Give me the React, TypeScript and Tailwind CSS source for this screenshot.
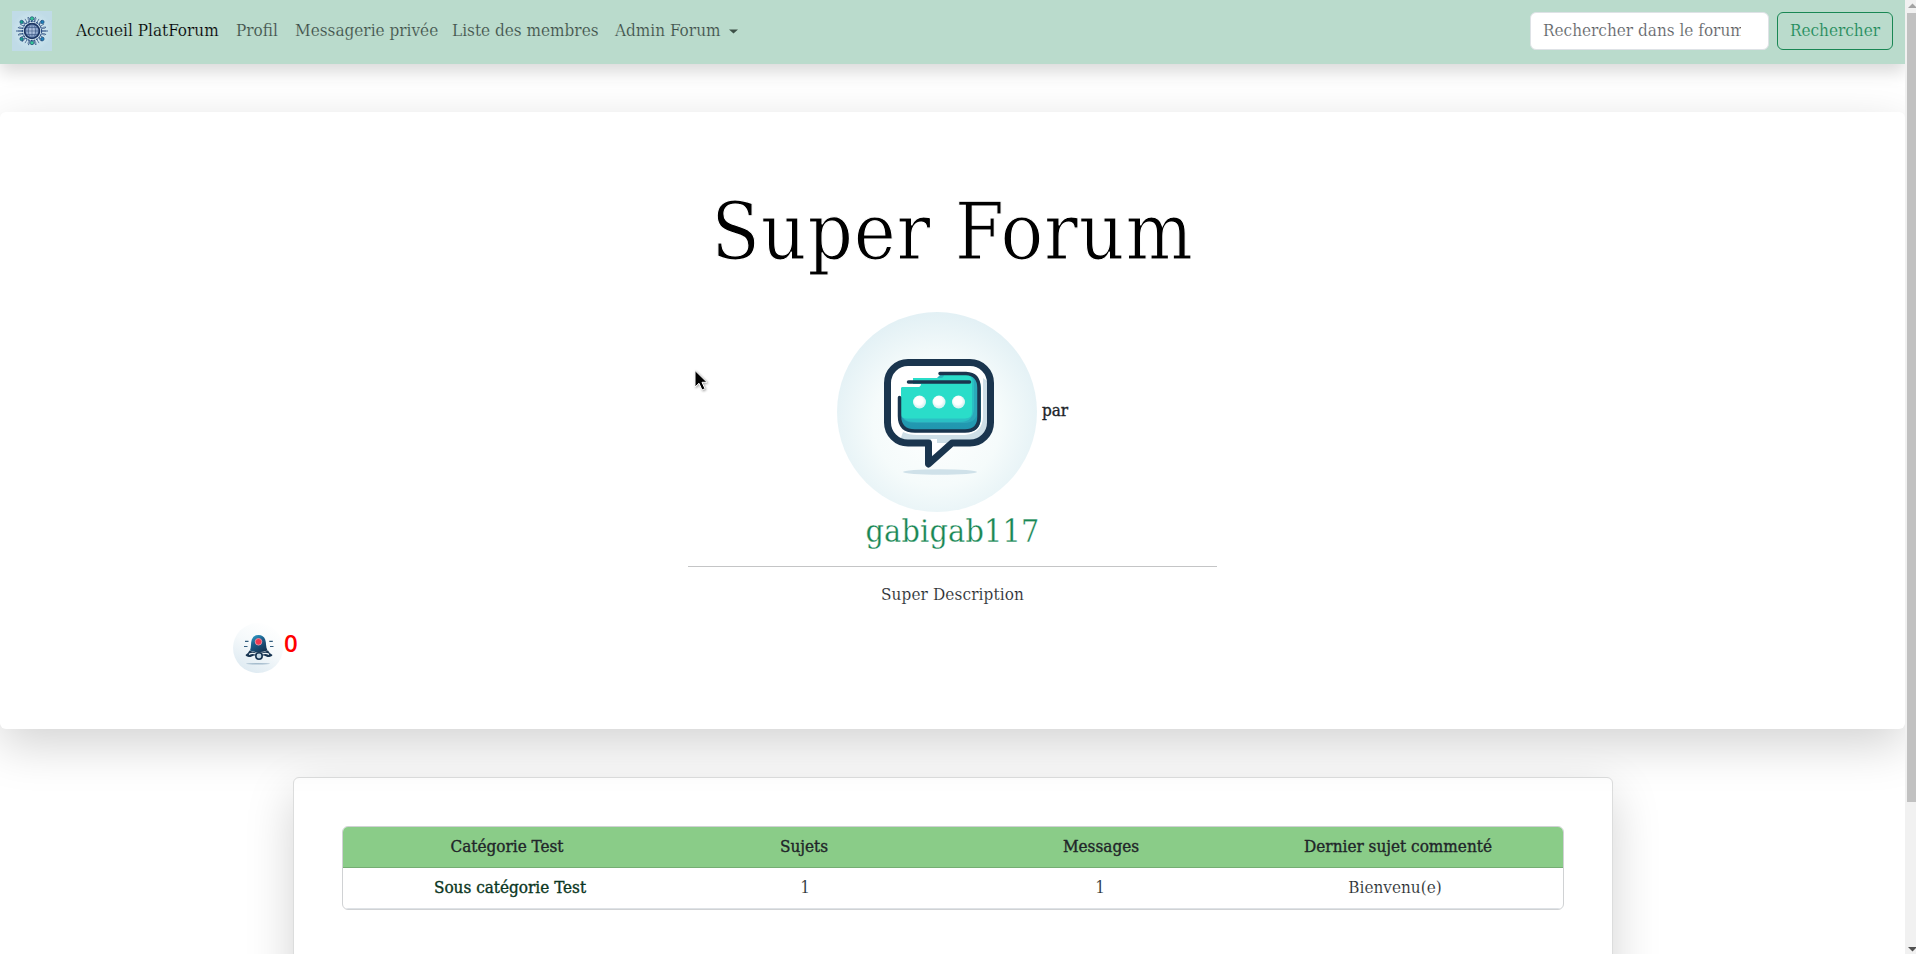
import React from "react";

function Logo() {
  const spokes = [0, 30, 60, 90, 120, 150, 180, 210, 240, 270, 300, 330];
  return (
    <svg width="40" height="40" viewBox="0 0 40 40" className="block">
      <defs>
        <radialGradient id="logoBg">
          <stop offset="0" stopColor="#eaf5fa" />
          <stop offset="0.7" stopColor="#c9e2ec" />
          <stop offset="1" stopColor="#c0dbe7" />
        </radialGradient>
        <radialGradient id="globe">
          <stop offset="0" stopColor="#c3d2ea" />
          <stop offset="1" stopColor="#7592bd" />
        </radialGradient>
      </defs>
      <rect width="40" height="40" fill="url(#logoBg)" />
      {spokes.map((a) => (
        <g key={a} transform={`rotate(${a} 20 20)`} stroke="#3f5f8b" fill="none">
          <path d="M20 11V6M17.5 10.500V7.500l-1.500-1M22.500 10.500V7.500l1.500-1" strokeWidth="0.7" />
          <circle cx="16" cy="6.500" r="0.500" fill="#3f5f8b" stroke="none" />
        </g>
      ))}
      <circle cx="20" cy="20" r="9.600" fill="none" stroke="#284b80" strokeWidth="1.200" strokeDasharray="2 0.900" />
      <circle cx="20" cy="20" r="7.400" fill="url(#globe)" stroke="#1c3563" strokeWidth="1.800" />
      <path d="M13 20h14M14 16.500h12M14 23.500h12M20 13v14" stroke="#34507e" strokeWidth="0.600" />
      <ellipse cx="20" cy="20" rx="3.600" ry="7" fill="none" stroke="#34507e" strokeWidth="0.600" />
      <path d="M4 20h7M29 20h7" stroke="#31568b" strokeWidth="0.900" />
      <g stroke="#1d4a78" strokeWidth="0.700">
        <circle cx="20" cy="7.600" r="1.900" fill="#35c795" />
        <circle cx="20" cy="31.800" r="1.900" fill="#35c795" />
        <circle cx="9.600" cy="11" r="1.700" fill="#17a08d" />
        <circle cx="30.400" cy="11" r="1.700" fill="#1e83bd" />
        <circle cx="9.600" cy="28" r="1.700" fill="#17a08d" />
        <circle cx="30.400" cy="28" r="1.700" fill="#1e83bd" />
      </g>
    </svg>
  );
}

function ForumAvatar() {
  return (
    <svg width="200" height="200" viewBox="0 0 200 200" className="block shrink-0">
      <defs>
        <radialGradient id="avBg" cx="0.5" cy="0.55" r="0.58">
          <stop offset="0" stopColor="#ffffff" />
          <stop offset="0.55" stopColor="#f5fbfb" />
          <stop offset="1" stopColor="#e0eff4" />
        </radialGradient>
        <linearGradient id="bubble" x1="0" y1="0" x2="0" y2="1">
          <stop offset="0" stopColor="#2cb6bd" />
          <stop offset="1" stopColor="#2094ae" />
        </linearGradient>
        <radialGradient id="dot" cx="0.45" cy="0.4">
          <stop offset="0.6" stopColor="#ffffff" />
          <stop offset="1" stopColor="#ddf3f3" />
        </radialGradient>
        <clipPath id="inside">
          <rect x="51" y="51" width="102" height="80" rx="20" />
        </clipPath>
      </defs>
      <circle cx="100" cy="100" r="100" fill="url(#avBg)" />
      <ellipse cx="103" cy="160" rx="37" ry="2.700" fill="#cfe1e9" />
      <path d="M71 51H133A20 20 0 0 1 153 71V111A20 20 0 0 1 133 131H116L92 152V131H71A20 20 0 0 1 51 111V71A20 20 0 0 1 71 51Z" fill="#ffffff" />
      <g clipPath="url(#inside)">
        <path d="M62 131L66 120Q72 123 80 123H128Q146 121 146 104V66L160 76V140H62Z" fill="#cedfe7" />
      </g>
      <path d="M94 127H101L96 144L114 127H124L93 150Z" fill="#cedfe7" />
      <path d="M94 127H100V138L94 145Z" fill="#fff" />
      <path d="M104 62H128Q144 62 144 78V105Q144 120 129 120H78Q64 120 64 106V90H110V66H100Z" fill="url(#bubble)" />
      <path d="M64 99H120Q136 99 136 82V66Q141 70 141 78V96Q141 111 127 111H80Q65 111 64 102Z" fill="#2ba9ba" />
      <path d="M76 66H104Q107 66 107 62H130Q137 64 137 70V95Q137 110 123 110H77Q64 110 64 98V77Q64 75 66 75H82Q84 75 84 72H76Z" fill="#2ac0c4" />
      <path d="M76 66H104Q107 66 107 62H128Q135 63 135 69V100Q135 106.500 128 106.500H70Q64 106.500 64 102V77Q64 75 66 75H82Q84 75 84 72H76Z" fill="#2addc9" />
      <path d="M103 61.500H129Q142 62 142 76V105Q142 119 128 119H78Q62.500 119 62.500 104V85.500" fill="none" stroke="#1a354e" strokeWidth="3.500" strokeLinecap="round" />
      <path d="M71.500 70H132.500" stroke="#1a354e" strokeWidth="3.500" strokeLinecap="round" />
      <circle cx="82.500" cy="90" r="6.500" fill="url(#dot)" />
      <circle cx="102" cy="90" r="6.500" fill="url(#dot)" />
      <circle cx="121.500" cy="90" r="6.500" fill="url(#dot)" />
      <path d="M71 50.500H133A20.500 20.500 0 0 1 153.500 71V110.500A20.500 20.500 0 0 1 133 131H115L91.500 152V131H71A20.500 20.500 0 0 1 50.500 110.500V71A20.500 20.500 0 0 1 71 50.500Z" fill="none" stroke="#1a354e" strokeWidth="7" strokeLinejoin="round" />
    </svg>
  );
}

function Bell() {
  return (
    <svg width="50" height="50" viewBox="0 0 50 50" className="block">
      <defs>
        <linearGradient id="bellBg" x1="0.7" y1="0" x2="0.2" y2="1">
          <stop offset="0" stopColor="#ffffff" />
          <stop offset="0.45" stopColor="#f5f9fb" />
          <stop offset="1" stopColor="#dce9f1" />
        </linearGradient>
        <linearGradient id="bellBody" x1="0.2" y1="0" x2="0.8" y2="1">
          <stop offset="0" stopColor="#2e9cc6" />
          <stop offset="0.4" stopColor="#1c5e8b" />
          <stop offset="1" stopColor="#14304e" />
        </linearGradient>
      </defs>
      <circle cx="25" cy="25" r="25" fill="url(#bellBg)" />
      <ellipse cx="25" cy="40.800" rx="12" ry="0.800" fill="#a5bccd" />
      <path d="M17 27.500C18.500 24 17.500 20 18.800 16.500Q20.500 12 25.500 12Q30.500 12 32.200 16.500C33.500 20 32.500 24 34.500 27.500Q25.500 31 17 27.500Z" fill="url(#bellBody)" />
      <path d="M16.500 27.500Q15.500 30 12.500 32Q13.500 34 17.500 34L21 32.500H31L34.500 34Q38.500 34 39.500 32Q36 30 35 27.500Q25.500 32 16.500 27.500Z" fill="#173451" />
      <path d="M16 31.300Q19 29.800 22.500 30.800H29.500Q33 29.800 36 31.300" stroke="#eef5f8" strokeWidth="1.300" fill="none" />
      <circle cx="26" cy="33" r="3.200" fill="#c5d8e4" stroke="#173451" strokeWidth="1.600" />
      <circle cx="25.500" cy="18.800" r="3.300" fill="#f0384f" stroke="#e996a6" strokeWidth="0.900" />
      <path d="M12 18.300h3.500M11 23.500h3.500M36.300 18.300h3.500M37 23.500h3.500" stroke="#315c7d" strokeWidth="1.200" />
    </svg>
  );
}

function Scrollbar() {
  return (
    <div className="flex h-full w-[11px] shrink-0 flex-col bg-[#f1f1f1] pl-[2px]">
      <svg width="9" height="13" viewBox="0 0 9 13" className="shrink-0">
        <path d="M1 8L5.500 3.500L10 8Z" fill="#a3a3a3" />
      </svg>
      <div className="h-[789px] shrink-0 bg-[#c1c1c1]" />
      <svg width="9" height="13" viewBox="0 0 9 13" className="mt-auto shrink-0">
        <path d="M1 6L5.500 10.500L10 6Z" fill="#505050" />
      </svg>
    </div>
  );
}

export default function App() {
  return (
    <div className="flex h-[954px] w-[1916px] overflow-hidden bg-white font-['DejaVu_Serif_Condensed','DejaVu_Serif',serif] text-[17px] font-normal leading-6 text-[#212529] [font-stretch:condensed]">
      <div className="relative h-full w-[1905px] overflow-hidden">
        <nav className="flex h-16 items-center bg-[#badbcc] px-3 pb-[2px] whitespace-nowrap text-[#3d4d46] shadow-[0_8px_16px_rgba(0,0,0,0.15)] [-webkit-text-stroke:0.2px_#badbcc]">
          <Logo />
          <a className="ml-6 w-[144px] pb-[3px] text-black">Accueil PlatForum</a>
          <a className="ml-4 w-[43px] pb-[3px]">Profil</a>
          <a className="ml-4 w-[141px] pb-[3px]">Messagerie privée</a>
          <a className="ml-4 w-[147px] pb-[3px]">Liste des membres</a>
          <a className="ml-4 w-[108px] pb-[3px]">Admin Forum</a>
          <svg width="9" height="5" viewBox="0 0 9 5" className="ml-[6px]">
            <path d="M0 0.500H9L4.500 4.500Z" fill="#3d5047" />
          </svg>
          <div className="ml-auto h-[38px] w-[239px] rounded-md border border-[#dee2e6] bg-white px-3 py-[5px] text-[#55595d] [-webkit-text-stroke:0.2px_#ffffff]">
            <div className="w-[198px] overflow-hidden">Rechercher dans le forum</div>
          </div>
          <button className="ml-2 h-[38px] w-[116px] rounded-md border border-[#198754] pb-[3px] text-center text-[#198754]">
            Rechercher
          </button>
        </nav>

        <header className="relative z-10 mt-12 h-[617px] rounded-md bg-white text-center shadow-[0_16px_48px_rgba(0,0,0,0.175)] [-webkit-text-stroke:0.15px_#ffffff]">
          <h1 className="pt-[72px] text-[79px] leading-[96px] tracking-[0.800px] text-black [-webkit-text-stroke:1.100px_#ffffff]">
            Super Forum
          </h1>
          <div className="mt-[32px] flex items-center justify-center gap-[5px]">
            <ForumAvatar />
            <b className="w-[27px] pb-[4px] font-normal text-[#212529] [-webkit-text-stroke:0.350px_#212529]">par</b>
          </div>
          <div className="text-[32px] leading-[38px] tracking-[0.200px] text-[#198754] [-webkit-text-stroke:0.300px_#ffffff]">gabigab117</div>
          <div className="mx-auto mt-4 h-px w-[529px] bg-[#c4c5c6]" />
          <p className="mt-[15px] tracking-[0.120px]">Super Description</p>
          <div className="mt-[17px] flex pl-[233px]">
            <Bell />
            <span className="mt-[3px] ml-px font-['Open_Sans',sans-serif] text-2xl leading-[33px] font-semibold text-[#ff0000] [-webkit-text-stroke:0px] [font-stretch:normal]">
              0
            </span>
          </div>
        </header>

        <main className="mx-auto mt-12 h-[400px] w-[1320px] rounded-md border border-[#dcdddd] bg-white p-12 shadow-[0_16px_48px_rgba(0,0,0,0.175)]">
          <div className="overflow-hidden rounded-md border border-[#d0d2d4] text-center">
            <div className="grid h-[41px] grid-cols-4 items-center border-b border-[#75ad73] bg-[#8acc88] px-4 pb-[2px] [-webkit-text-stroke:0.350px_#212529]">
              <b className="font-normal">Catégorie Test</b>
              <b className="font-normal">Sujets</b>
              <b className="font-normal">Messages</b>
              <b className="font-normal">Dernier sujet commenté</b>
            </div>
            <div className="grid h-[41px] grid-cols-4 items-center border-b border-[#dee2e6] px-4 pb-[2px] [-webkit-text-stroke:0.150px_#ffffff]">
              <b className="pl-[6px] font-normal text-[#0a3622] [-webkit-text-stroke:0.350px_#0a3622]">Sous catégorie Test</b>
              <span className="pl-[2px]">1</span>
              <span className="pr-[2px]">1</span>
              <span className="pr-[6px]">Bienvenu(e)</span>
            </div>
          </div>
        </main>

        <svg width="16" height="24" viewBox="0 0 16 24" className="absolute top-[369px] left-[693px] z-20 drop-shadow-[1px_1px_1px_rgba(0,0,0,0.35)]">
          <path d="M2 1.500V18L6 14.300L9 21L12 19.700L9 13.300H14Z" fill="#000" stroke="#fff" strokeWidth="1" />
        </svg>
      </div>
      <Scrollbar />
    </div>
  );
}
